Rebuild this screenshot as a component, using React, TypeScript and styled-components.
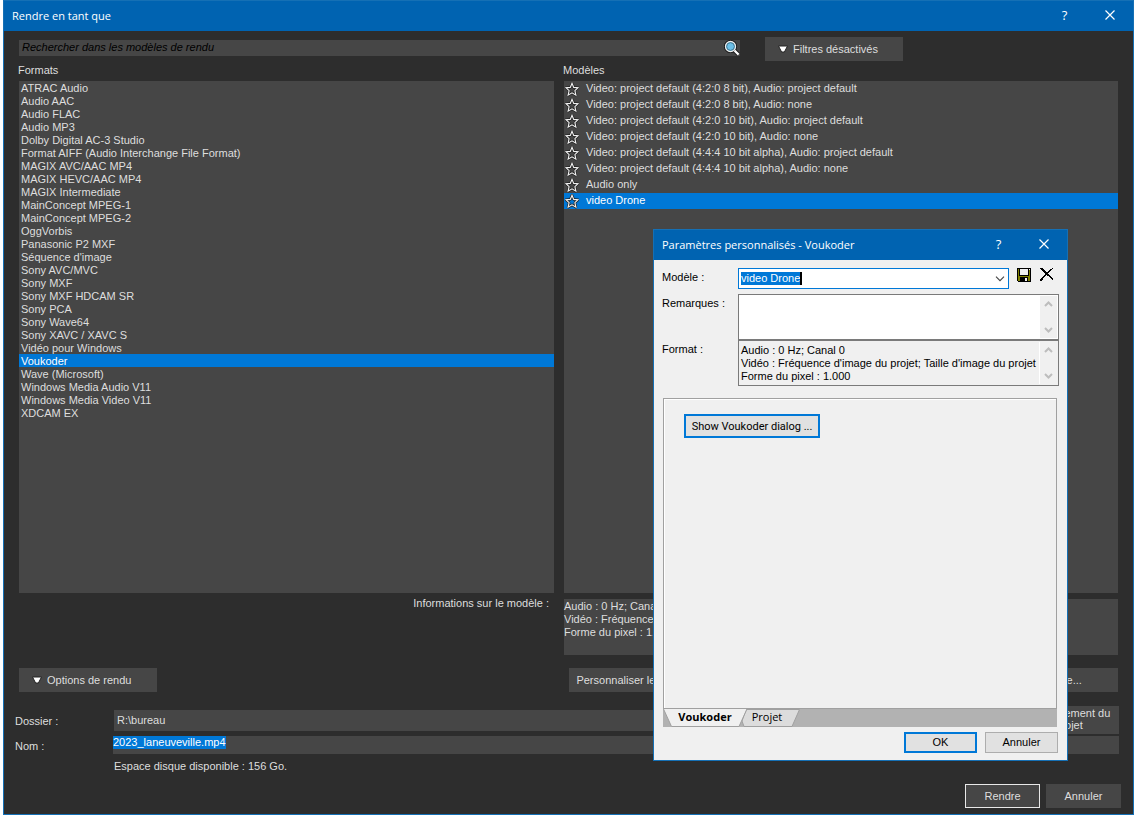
import React from 'react';
import styled, { createGlobalStyle, css } from 'styled-components';

const color = {
  accent: '#0063b1',
  edge: '#1570b5',
  select: '#0078d7',
  window: '#2d2d2d',
  panel: '#464646',
  text: '#dedede',
  dialog: '#f0f0f0',
  line: '#a0a0a0',
};

const uiFont = '"Liberation Sans", Arial, sans-serif';
const captionFont = '"Open Sans", "Noto Sans", sans-serif';

const GlobalStyle = createGlobalStyle`
  * { box-sizing: border-box; }
  body { margin: 0; background: #fff; font: 11px/13px ${uiFont}; }
  button, input, textarea { font: inherit; color: inherit; margin: 0; padding: 0; border: 0; border-radius: 0; }
  svg { display: block; flex: none; }
  ul { list-style: none; margin: 0; padding: 0; }
`;

const Page = styled.div`
  display: flex;
  min-height: 100vh;
  padding: 0 0 1px 3px;
`;

const Window = styled.main`
  position: relative;
  flex: 1;
  display: flex;
  flex-direction: column;
  min-width: 0;
  border: 1px solid ${color.edge};
  background: ${color.window};
  color: ${color.text};
`;

const TitleBar = styled.header`
  display: flex;
  align-items: center;
  height: 30px;
  padding: 0 1px 2px 8px;
  background: ${color.accent};
  color: #fff;
  font-family: ${captionFont};
`;

const Title = styled.h1`
  flex: 1;
  margin: 0;
  font-size: 11px;
  font-weight: 400;
`;

const CaptionButton = styled.button`
  display: flex;
  align-items: center;
  justify-content: center;
  width: 45px;
  height: 28px;
  background: transparent;
  font-size: 13px;
`;

const Content = styled.div`
  flex: 1;
  display: flex;
  flex-direction: column;
  padding: 6px 15px 0;
`;

const SearchRow = styled.div`
  display: flex;
  align-items: center;
  gap: 25px;
`;

const SearchField = styled.label`
  display: flex;
  align-items: center;
  width: 721px;
  height: 16px;
  margin-bottom: 2px;
  padding-left: 3px;
  background: ${color.panel};
`;

const SearchInput = styled.input`
  flex: 1;
  height: 16px;
  padding-bottom: 2px;
  background: transparent;
  outline: 0;
  &::placeholder { color: #000; opacity: 1; font-style: italic; }
`;

const DarkButton = styled.button<{ $width: number; $framed?: boolean; $menu?: boolean }>`
  display: flex;
  align-items: center;
  justify-content: ${p => (p.$menu ? 'flex-start' : 'center')};
  gap: 5px;
  width: ${p => p.$width}px;
  height: 24px;
  padding-left: ${p => (p.$menu ? 13 : 0)}px;
  background: ${color.panel};
  ${p => p.$framed && css`border: 1px solid #e8e8e8;`}
`;

const Columns = styled.div`
  flex: 1;
  display: grid;
  grid-template-columns: 535fr 554fr;
  column-gap: 10px;
`;

const Column = styled.section`
  display: flex;
  flex-direction: column;
  min-width: 0;
`;

const Heading = styled.h2`
  margin: 0 0 0 -1px;
  padding: 3px 0 4px;
  font-size: 11px;
  font-weight: 400;
`;

const List = styled.ul`
  flex: 1;
  background: ${color.panel};
`;

const Item = styled.li<{ $selected?: boolean; $tall?: boolean }>`
  display: flex;
  align-items: center;
  gap: 7px;
  height: ${p => (p.$tall ? 16 : 13)}px;
  padding-left: ${p => (p.$tall ? 1 : 2)}px;
  white-space: nowrap;
  ${p => p.$selected && css`background: ${color.select}; color: #fff;`}
`;

const ItemText = styled.span<{ $raised?: boolean }>`
  padding: ${p => (p.$raised ? '0 0 2px' : '2px 0 0')};
`;

const InfoRow = styled.div`
  display: grid;
  grid-template-columns: 535fr 554fr;
  column-gap: 10px;
  padding-top: 4px;
`;

const InfoLabel = styled.div`
  padding-right: 5px;
  text-align: right;
`;

const InfoText = styled.div`
  height: 56px;
  margin-top: 2px;
  padding-top: 1px;
  background: ${color.panel};
  white-space: pre-line;
`;

const ActionRow = styled.div`
  display: grid;
  grid-template-columns: 535fr 554fr;
  column-gap: 10px;
  padding: 13px 0 14px;
`;

const TemplateActions = styled.div`
  display: flex;
  justify-content: space-between;
  padding-left: 5px;
`;

const OutputForm = styled.div`
  display: grid;
  grid-template-columns: 98px 1fr;
  row-gap: 2px;
  align-items: center;
  margin: 0 -1px 0 -4px;
`;

const OutputLabel = styled.label`
  padding-top: 2px;
`;

const FolderRow = styled.div`
  display: flex;
  align-items: center;
  gap: 8px;
  padding-left: 1px;
`;

const FolderInput = styled.input`
  flex: 1;
  height: 21px;
  padding-left: 3px;
  background: ${color.panel};
`;

const ProjectButton = styled.button`
  width: 100px;
  height: 28px;
  padding-bottom: 2px;
  background: ${color.panel};
  line-height: 12px;
`;

const NameBox = styled.div`
  display: flex;
  align-items: flex-start;
  height: 18px;
  background: ${color.panel};
`;

const SelectedInput = styled.input<{ $caret?: boolean }>`
  field-sizing: content;
  height: 13px;
  background: ${color.select};
  color: #fff;
  outline: 0;
  ${p => p.$caret && css`border-right: 2px solid #000;`}
`;

const DiskSpace = styled.p`
  grid-column: 2;
  margin: 0;
  padding: 4px 0 11px 1px;
`;

const Footer = styled.footer`
  display: flex;
  justify-content: flex-end;
  gap: 6px;
  padding-bottom: 6px;
  margin-right: -3px;
`;

const Dialog = styled.div`
  position: absolute;
  top: 228px;
  left: 649px;
  width: 415px;
  border: 1px solid ${color.edge};
  background: ${color.dialog};
  color: #000;
`;

const DialogBody = styled.div`
  padding: 8px 8px 7px;
`;

const Fields = styled.div`
  display: grid;
  grid-template-columns: 76px 1fr;
`;

const FieldLabel = styled.label`
  padding-top: 3px;
`;

const TemplateRow = styled.div`
  display: flex;
  align-items: flex-start;
  gap: 8px;
  padding-bottom: 5px;
`;

const Combo = styled.div`
  display: flex;
  align-items: center;
  justify-content: space-between;
  width: 271px;
  height: 21px;
  padding: 0 3px 0 2px;
  border: 1px solid ${color.select};
  background: #fff;
`;

const IconButton = styled.button`
  display: flex;
  background: transparent;
`;

const ScrollBox = styled.div<{ $plain?: boolean }>`
  display: flex;
  height: 46px;
  padding: 1px;
  border: 1px solid #7a7a7a;
  background: ${p => (p.$plain ? '#fff' : color.dialog)};
`;

const TextArea = styled.textarea`
  flex: 1;
  min-width: 0;
  padding: 2px 0 0 1px;
  background: transparent;
  resize: none;
  outline: 0;
  overflow: hidden;
  white-space: pre;
`;

const ScrollBar = styled.div`
  display: flex;
  flex-direction: column;
  align-items: center;
  justify-content: space-between;
  width: 18px;
  padding: 5px 1px 5px 0;
  border-left: 1px solid #fff;
  background: ${color.dialog};
`;

const Sheet = styled.div`
  height: 311px;
  margin: 12px 2px 0 1px;
  padding: 15px 20px;
  border: 1px solid ${color.line};
  box-shadow: inset 1px 1px #fff;
`;

const TabStrip = styled.div`
  display: flex;
  height: 18px;
  margin: 0 2px 5px 1px;
  background: #b2b2b2;
  font-family: ${captionFont};
`;

const Tab = styled.button<{ $active?: boolean }>`
  position: relative;
  width: ${p => (p.$active ? 84 : 58)}px;
  height: 18px;
  margin-left: ${p => (p.$active ? 0 : -5)}px;
  padding: ${p => (p.$active ? '0 0 3px' : '0 8px 3px 0')};
  background: transparent;
  font-weight: ${p => (p.$active ? 700 : 400)};
  z-index: ${p => (p.$active ? 1 : 0)};
`;

const TabShape = styled.svg`
  position: absolute;
  inset: 0;
  z-index: -1;
`;

const DialogButtons = styled.div`
  display: flex;
  justify-content: flex-end;
  gap: 8px;
  padding-right: 1px;
`;

const LightButton = styled.button<{ $primary?: boolean; $large?: boolean }>`
  width: ${p => (p.$large ? 136 : 73)}px;
  height: ${p => (p.$large ? 24 : 21)}px;
  border: ${p => (p.$primary ? `2px solid ${color.select}` : '1px solid #adadad')};
  background: #e1e1e1;
  white-space: nowrap;
  ${p => p.$large && css`font-family: Roboto, sans-serif;`}
`;

const CloseIcon = () => (
  <svg width="10" height="10" viewBox="0 0 10 10">
    <path d="M0.5 0.5 9.5 9.5M9.5 0.5 0.5 9.5" stroke="#fff" fill="none" strokeWidth="1.2" />
  </svg>
);

const TriangleIcon = () => (
  <svg width="10" height="8" viewBox="0 0 10 8">
    <path d="M0.5 1h9L6.4 7H3.6z" fill="#fff" stroke="#222" strokeWidth="1" />
  </svg>
);

const StarIcon = () => (
  <svg width="14" height="16" viewBox="0 0 14 16">
    <path
      d="M7 2.2 8.7 6.4 13 6.7 9.9 9.6 10.9 14.2 7 11.9 3.1 14.2 4.1 9.6 1 6.7 5.3 6.4z"
      fill="none" stroke="#252525" strokeWidth="2.6" strokeLinejoin="round"
    />
    <path
      d="M7 2.2 8.7 6.4 13 6.7 9.9 9.6 10.9 14.2 7 11.9 3.1 14.2 4.1 9.6 1 6.7 5.3 6.4z"
      fill="none" stroke="#f2f2f2" strokeWidth="1.1"
    />
  </svg>
);

const SearchIcon = () => (
  <svg width="16" height="16" viewBox="0 0 16 16">
    <path d="M10 10 14.5 14.5" stroke="#1c1c1c" strokeWidth="4" />
    <circle cx="6.5" cy="6.5" r="5.4" fill="#6cc0e8" stroke="#1c1c1c" strokeWidth="2.4" />
    <circle cx="6.5" cy="6.5" r="5" fill="#6cc0e8" stroke="#eee" strokeWidth="1.3" />
    <circle cx="6.5" cy="6.5" r="3.9" fill="none" stroke="#2b5468" strokeWidth="0.7" />
    <path d="M10.5 10.5 14.6 14.6" stroke="#fff" strokeWidth="2.2" />
  </svg>
);

const ChevronIcon = () => (
  <svg width="10" height="6" viewBox="0 0 10 6">
    <path d="M1 0.7 5 4.7 9 0.7" stroke="#444" fill="none" strokeWidth="1.1" />
  </svg>
);

const ScrollArrow = ({ up }: { up?: boolean }) => (
  <svg width="9" height="6" viewBox="0 0 9 6">
    <path d={up ? 'M1 5 4.5 1.5 8 5' : 'M1 1 4.5 4.5 8 1'} stroke="#bdbdbd" fill="none" strokeWidth="2" />
  </svg>
);

const SaveIcon = () => (
  <svg width="14" height="14" viewBox="0 0 14 14" shapeRendering="crispEdges">
    <path d="M0 0h14v14H1L0 13z" fill="#000" />
    <path d="M1 1h12v12H1z" fill="#808000" />
    <path d="M2 0h10v8H2zM3 9h8v5H3z" fill="#000" />
    <path d="M3 1h8v6H3z" fill="#f0f0f0" />
    <path d="M8 10h2v3H8zM12 1h1v1h-1z" fill="#f0f0f0" />
  </svg>
);

const DeleteIcon = () => (
  <svg width="15" height="14" viewBox="0 0 15 14" shapeRendering="crispEdges">
    <path d="M1 0h3v1h1v1h1v1h1v1h1v1h1v1h1v1h1v1h1v1h1v1h1v1h-2v-1h-1v-1h-1v-1H9V8H8V7H7V6H6V5H5V4H4V3H3V2H2V1H1z" />
    <path d="M13 0h1v1h-1v1h-1v1h-1v1h-1v1H9v1H8v1H7v1H6v1H5v1H4v2H3v1H1v-2h1v-1h1V9h1V8h1V7h1V6h1V5h1V4h1V3h1V2h1V1h2zM13 11h1v1h-1z" />
  </svg>
);

const formats = [
  'ATRAC Audio', 'Audio AAC', 'Audio FLAC', 'Audio MP3', 'Dolby Digital AC-3 Studio',
  'Format AIFF (Audio Interchange File Format)', 'MAGIX AVC/AAC MP4', 'MAGIX HEVC/AAC MP4',
  'MAGIX Intermediate', 'MainConcept MPEG-1', 'MainConcept MPEG-2', 'OggVorbis',
  'Panasonic P2 MXF', "Séquence d'image", 'Sony AVC/MVC', 'Sony MXF', 'Sony MXF HDCAM SR',
  'Sony PCA', 'Sony Wave64', 'Sony XAVC / XAVC S', 'Vidéo pour Windows', 'Voukoder',
  'Wave (Microsoft)', 'Windows Media Audio V11', 'Windows Media Video V11', 'XDCAM EX',
];

const templates = [
  'Video: project default (4:2:0 8 bit), Audio: project default',
  'Video: project default (4:2:0 8 bit), Audio: none',
  'Video: project default (4:2:0 10 bit), Audio: project default',
  'Video: project default (4:2:0 10 bit), Audio: none',
  'Video: project default (4:4:4 10 bit alpha), Audio: project default',
  'Video: project default (4:4:4 10 bit alpha), Audio: none',
  'Audio only',
  'video Drone',
];

const summary =
  "Audio : 0 Hz; Canal 0\nVidéo : Fréquence d'image du projet; Taille d'image du projet\nForme du pixel : 1.000";

const Caption = ({ title }: { title: string }) => (
  <TitleBar>
    <Title>{title}</Title>
    <CaptionButton aria-label="Aide">?</CaptionButton>
    <CaptionButton aria-label="Fermer"><CloseIcon /></CaptionButton>
  </TitleBar>
);

const TemplateDialog = () => (
  <Dialog role="dialog" aria-label="Paramètres personnalisés">
    <Caption title="Paramètres personnalisés - Voukoder" />
    <DialogBody>
      <Fields>
        <FieldLabel htmlFor="template">Modèle :</FieldLabel>
        <TemplateRow>
          <Combo>
            <SelectedInput id="template" defaultValue="video Drone" $caret />
            <IconButton aria-label="Ouvrir la liste"><ChevronIcon /></IconButton>
          </Combo>
          <IconButton aria-label="Enregistrer"><SaveIcon /></IconButton>
          <IconButton aria-label="Supprimer"><DeleteIcon /></IconButton>
        </TemplateRow>
        <FieldLabel htmlFor="notes">Remarques :</FieldLabel>
        <ScrollBox $plain>
          <TextArea id="notes" />
          <ScrollBar><ScrollArrow up /><ScrollArrow /></ScrollBar>
        </ScrollBox>
        <FieldLabel htmlFor="format">Format :</FieldLabel>
        <ScrollBox>
          <TextArea id="format" readOnly defaultValue={summary} />
          <ScrollBar><ScrollArrow up /><ScrollArrow /></ScrollBar>
        </ScrollBox>
      </Fields>
      <Sheet>
        <LightButton $primary $large>Show Voukoder dialog ...</LightButton>
      </Sheet>
      <TabStrip role="tablist">
        <Tab role="tab" aria-selected $active>
          <TabShape width="84" height="18" viewBox="0 0 84 18">
            <path d="M0 -1 8.5 17.5H76L84 -1z" fill={color.dialog} />
            <path d="M0.5 0 8.5 17.5H76L84 0" fill="none" stroke={color.line} />
          </TabShape>
          Voukoder
        </Tab>
        <Tab role="tab" aria-selected={false}>
          <TabShape width="58" height="18" viewBox="0 0 58 18">
            <path d="M4 0.5H57.5L50 17.5H2L0 12z" fill="#dcdcdc" stroke={color.line} />
          </TabShape>
          Projet
        </Tab>
      </TabStrip>
      <DialogButtons>
        <LightButton $primary>OK</LightButton>
        <LightButton>Annuler</LightButton>
      </DialogButtons>
    </DialogBody>
  </Dialog>
);

export default function App() {
  return (
    <Page>
      <GlobalStyle />
      <Window>
        <Caption title="Rendre en tant que" />
        <Content>
          <SearchRow>
            <SearchField>
              <SearchInput
                type="text"
                aria-label="Rechercher"
                placeholder="Rechercher dans les modèles de rendu"
              />
              <SearchIcon />
            </SearchField>
            <DarkButton $width={138} $menu><TriangleIcon />Filtres désactivés</DarkButton>
          </SearchRow>
          <Columns>
            <Column>
              <Heading>Formats</Heading>
              <List role="listbox" aria-label="Formats">
                {formats.map(name => (
                  <Item key={name} role="option" aria-selected={name === 'Voukoder'} $selected={name === 'Voukoder'}>
                    <ItemText>{name}</ItemText>
                  </Item>
                ))}
              </List>
            </Column>
            <Column>
              <Heading>Modèles</Heading>
              <List role="listbox" aria-label="Modèles">
                {templates.map(name => (
                  <Item key={name} role="option" aria-selected={name === 'video Drone'} $tall $selected={name === 'video Drone'}>
                    <StarIcon />
                    <ItemText $raised>{name}</ItemText>
                  </Item>
                ))}
              </List>
            </Column>
          </Columns>
          <InfoRow>
            <InfoLabel>Informations sur le modèle :</InfoLabel>
            <InfoText>{summary}</InfoText>
          </InfoRow>
          <ActionRow>
            <DarkButton $width={138} $menu><TriangleIcon />Options de rendu</DarkButton>
            <TemplateActions>
              <DarkButton $width={142}>Personnaliser le modèle...</DarkButton>
              <DarkButton $width={186}>Enregistrer le modèle...</DarkButton>
            </TemplateActions>
          </ActionRow>
          <OutputForm>
            <OutputLabel htmlFor="folder">Dossier :</OutputLabel>
            <FolderRow>
              <FolderInput id="folder" defaultValue="R:\bureau" />
              <ProjectButton>Emplacement du projet</ProjectButton>
            </FolderRow>
            <OutputLabel htmlFor="file">Nom :</OutputLabel>
            <NameBox><SelectedInput id="file" defaultValue="2023_laneuveville.mp4" /></NameBox>
            <DiskSpace>Espace disque disponible : 156 Go.</DiskSpace>
          </OutputForm>
          <Footer>
            <DarkButton $width={75} $framed>Rendre</DarkButton>
            <DarkButton $width={75}>Annuler</DarkButton>
          </Footer>
        </Content>
        <TemplateDialog />
      </Window>
    </Page>
  );
}
